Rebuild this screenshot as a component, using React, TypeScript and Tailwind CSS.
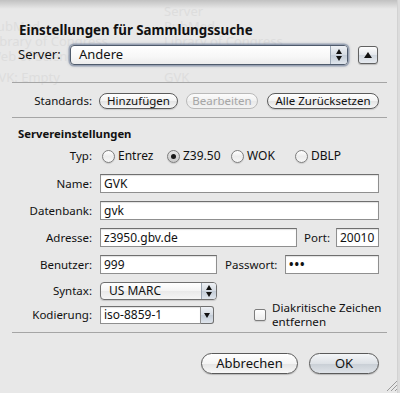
import React from 'react';

const sans = "font-['Noto_Sans','Open_Sans',sans-serif]";

function Triangle({ dir = 'up', size = 7, className = '' }: { dir?: 'up' | 'down'; size?: number; className?: string }) {
  const h = Math.round(size * 0.8);
  return (
    <svg width={size} height={h} viewBox={`0 0 ${size} ${h}`} className={className}>
      {dir === 'up' ? (
        <polygon points={`0,${h} ${size / 2},0 ${size},${h}`} fill="#111" />
      ) : (
        <polygon points={`0,0 ${size / 2},${h} ${size},0`} fill="#111" />
      )}
    </svg>
  );
}

function Stepper({ className = '' }: { className?: string }) {
  return (
    <div className={`flex flex-col items-center justify-center gap-[2px] ${className}`}>
      <Triangle dir="up" size={6} />
      <Triangle dir="down" size={6} />
    </div>
  );
}

function PillButton({ label, width, disabled = false }: { label: string; width: string; disabled?: boolean }) {
  return (
    <div
      className={`flex h-[16px] items-center justify-center rounded-full border text-[11.5px] leading-none ${width} ${
        disabled
          ? 'border-[#b9b9b9] bg-[linear-gradient(to_bottom,#fbfbfb,#f1f1f1_50%,#e9e9e9_51%,#f3f3f3)] text-[#a6a6a6]'
          : 'border-[#5c5c5c] bg-[linear-gradient(to_bottom,#ffffff,#f3f3f3_50%,#e4e4e4_51%,#f6f6f6)] text-[#111] shadow-[0_1px_1px_rgba(0,0,0,0.15)]'
      }`}
    >
      {label}
    </div>
  );
}

function Field({ value, className = '' }: { value: string; className?: string }) {
  return (
    <div
      className={`flex h-[19px] items-center border border-[#8f8f8f] border-t-[#6f6f6f] bg-white px-[3px] text-[12px] shadow-[inset_0_1px_1px_rgba(0,0,0,0.12)] ${className}`}
    >
      {value}
    </div>
  );
}

function Label({ text, className = 'w-[80px]' }: { text: string; className?: string }) {
  return <span className={`shrink-0 whitespace-nowrap text-right text-[11.5px] ${className}`}>{text}</span>;
}

function Radio({ label, checked = false }: { label: string; checked?: boolean }) {
  return (
    <div className="flex items-center gap-[3px]">
      <span
        className={`flex h-[13px] w-[13px] items-center justify-center rounded-full border border-[#7d7d7d] shadow-[0_1px_1px_rgba(0,0,0,0.12)] ${
          checked
            ? 'bg-[linear-gradient(to_bottom,#e6e6e6,#c9c9c9)]'
            : 'bg-[linear-gradient(to_bottom,#ffffff,#ececec_50%,#f7f7f7)]'
        }`}
      >
        {checked && <span className="h-[5px] w-[5px] rounded-full bg-[#1a1a1a]" />}
      </span>
      <span className="text-[12px]">{label}</span>
    </div>
  );
}

function Separator({ className = '' }: { className?: string }) {
  return <div className={`h-px bg-[#a5a5a5] ${className}`} />;
}

// faint list of the window that lies behind the translucent sheet
function Backdrop() {
  const left = ['PubMed', 'Library of Congress', 'Web of Science'];
  const right = ['Server', 'PubMed', 'Library of Congress'];
  return (
    <div className="pointer-events-none absolute inset-0 text-[13px] leading-[15px] text-[#dddddd]">
      <div className="flex pt-[4px]">
        <div className="-ml-[11px] w-[175px] pt-[15px]">
          {left.map((t) => (
            <div key={t}>{t}</div>
          ))}
          <div className="mt-[6px]">GVK: Empty</div>
        </div>
        <div>
          {right.map((t) => (
            <div key={t}>{t}</div>
          ))}
          <div className="mt-[21px]">GVK</div>
        </div>
      </div>
    </div>
  );
}

function ResizeGrip() {
  return (
    <svg width="12" height="12" viewBox="0 0 12 12" className="pointer-events-none absolute bottom-[1px] right-[2px]">
      <line x1="11" y1="1" x2="1" y2="11" stroke="#9a9a9a" />
      <line x1="11" y1="5" x2="5" y2="11" stroke="#9a9a9a" />
      <line x1="11" y1="9" x2="9" y2="11" stroke="#9a9a9a" />
    </svg>
  );
}

export default function App() {
  return (
    <div className={`relative flex h-[393px] w-[400px] overflow-hidden bg-[#e8e8e8] text-[#111] ${sans}`}>
      <Backdrop />
      <div className="pointer-events-none absolute inset-x-0 top-0 h-[9px] bg-[linear-gradient(to_bottom,rgba(0,0,0,0.17),rgba(0,0,0,0))]" />

      <main className="relative flex flex-1 flex-col pl-[12px] pr-[10px] pt-[22px]">
        <h1 className="pl-[7px] text-[13.3px] font-bold leading-[16px]">Einstellungen für Sammlungssuche</h1>

        <div className="mt-[7px] flex h-[20px] items-center pl-[6px]">
          <span className="w-[52px] shrink-0 text-[13px]">Server:</span>
          <div className="flex h-[20px] w-[278px] items-stretch overflow-hidden rounded-[4px] border border-[#4f5b6c] bg-[linear-gradient(to_bottom,#ffffff,#f7f7f7_60%,#ececec)] shadow-[0_0_0_1.5px_rgba(120,135,160,0.55),0_0_3px_1px_rgba(90,105,130,0.45)]">
            <span className="flex flex-1 items-center pl-[8px] text-[13px]">Andere</span>
            <Stepper className="w-[17px] border-l border-[#9ba6b4] bg-[linear-gradient(to_bottom,#eef1f5,#d4dae2_50%,#c3ccd7_51%,#dfe5ec)]" />
          </div>
          <div className="ml-[10px] flex h-[18px] w-[20px] items-center justify-center rounded-[3px] border border-[#616161] bg-[linear-gradient(to_bottom,#fdfdfd,#e3e7ec_50%,#d0d7df_51%,#e6eaef)] shadow-[0_1px_1px_rgba(0,0,0,0.2)]">
            <Triangle dir="up" size={8} />
          </div>
        </div>

        <Separator className="mt-[17px]" />

        <div className="mt-[10px] flex h-[16px] items-center pl-[18px]">
          <Label text="Standards:" className="w-[62px]" />
          <div className="ml-[7px] flex items-center">
            <PillButton label="Hinzufügen" width="w-[79px]" />
            <div className="ml-[8px]">
              <PillButton label="Bearbeiten" width="w-[72px]" disabled />
            </div>
            <div className="ml-[9px]">
              <PillButton label="Alle Zurücksetzen" width="w-[112px]" />
            </div>
          </div>
        </div>

        <Separator className="mt-[8px]" />

        <h2 className="mt-[8px] pl-[6px] text-[11.3px] font-bold leading-[16px]">Servereinstellungen</h2>

        <div className="mt-[6px] flex h-[16px] items-center">
          <Label text="Typ:" />
          <div className="ml-[10px] grid grid-cols-[65px_64px_64px_auto] items-center">
            <Radio label="Entrez" />
            <Radio label="Z39.50" checked />
            <Radio label="WOK" />
            <Radio label="DBLP" />
          </div>
        </div>

        <div className="mt-[10px] flex items-center pr-[8px]">
          <Label text="Name:" />
          <Field value="GVK" className="ml-[8px] flex-1" />
        </div>

        <div className="mt-[8px] flex items-center pr-[8px]">
          <Label text="Datenbank:" />
          <Field value="gvk" className="ml-[8px] flex-1" />
        </div>

        <div className="mt-[8px] flex items-center pr-[8px]">
          <Label text="Adresse:" />
          <Field value="z3950.gbv.de" className="ml-[8px] w-[197px]" />
          <Label text="Port:" className="ml-[7px] w-[26px]" />
          <Field value="20010" className="ml-[6px] flex-1" />
        </div>

        <div className="mt-[8px] flex items-center pr-[8px]">
          <Label text="Benutzer:" />
          <Field value="999" className="ml-[8px] w-[117px]" />
          <Label text="Passwort:" className="ml-[8px] w-[50px]" />
          <Field value="•••" className="ml-auto w-[94px] font-bold tracking-[1px]" />
        </div>

        <div className="mt-[8px] flex items-center">
          <Label text="Syntax:" />
          <div className="ml-[8px] flex h-[18px] w-[117px] items-stretch overflow-hidden rounded-[4px] border border-[#6f6f6f] bg-[linear-gradient(to_bottom,#ffffff,#f4f4f4_50%,#e9e9e9_51%,#f5f5f5)] shadow-[0_1px_1px_rgba(0,0,0,0.15)]">
            <span className="flex flex-1 items-center pl-[8px] text-[12px]">US MARC</span>
            <Stepper className="w-[15px] border-l border-[#9aa4b1] bg-[linear-gradient(to_bottom,#eef1f5,#d4dae2_50%,#c3ccd7_51%,#dfe5ec)]" />
          </div>
        </div>

        <div className="mt-[1px] flex items-center">
          <Label text="Kodierung:" />
          <div className="ml-[8px] flex h-[18px] w-[114px] items-stretch">
            <span className="flex flex-1 items-center border border-[#8f8f8f] border-t-[#6f6f6f] bg-white px-[3px] text-[12px] shadow-[inset_0_1px_1px_rgba(0,0,0,0.12)]">
              iso-8859-1
            </span>
            <span className="flex w-[13px] items-center justify-center rounded-r-[3px] border border-l-0 border-[#6f6f6f] bg-[linear-gradient(to_bottom,#eef1f5,#d4dae2_50%,#c3ccd7_51%,#dfe5ec)]">
              <Triangle dir="down" size={6} />
            </span>
          </div>
          <span className="ml-[40px] h-[12px] w-[12px] shrink-0 rounded-[2px] border border-[#7d7d7d] bg-[linear-gradient(to_bottom,#ffffff,#ededed)] shadow-[0_1px_1px_rgba(0,0,0,0.12)]" />
          <span className="ml-[6px] text-[11.6px] leading-[14px]">
            Diakritische Zeichen
            <br />
            entfernen
          </span>
        </div>

        <Separator className="mt-[3px]" />

        <div className="mt-[20px] flex justify-end gap-[11px] pr-[8px]">
          <div className="flex h-[21px] w-[97px] items-center justify-center rounded-full border border-[#5a5a5a] bg-[linear-gradient(to_bottom,#ffffff,#f4f4f4_50%,#e4e4e4_51%,#f8f8f8)] text-[13px] shadow-[0_1px_1px_rgba(0,0,0,0.2)]">
            Abbrechen
          </div>
          <div className="flex h-[21px] w-[70px] items-center justify-center rounded-full border border-[#5a5a5a] bg-[linear-gradient(to_bottom,#f4f6f8,#dde1e6_50%,#c8ced5_51%,#dfe3e8)] text-[13px] shadow-[0_1px_1px_rgba(0,0,0,0.2)]">
            OK
          </div>
        </div>
      </main>

      <div className="relative w-[3px] border-l border-[#d2d2d2] bg-[#dcdcdc]" />
      <ResizeGrip />
    </div>
  );
}
